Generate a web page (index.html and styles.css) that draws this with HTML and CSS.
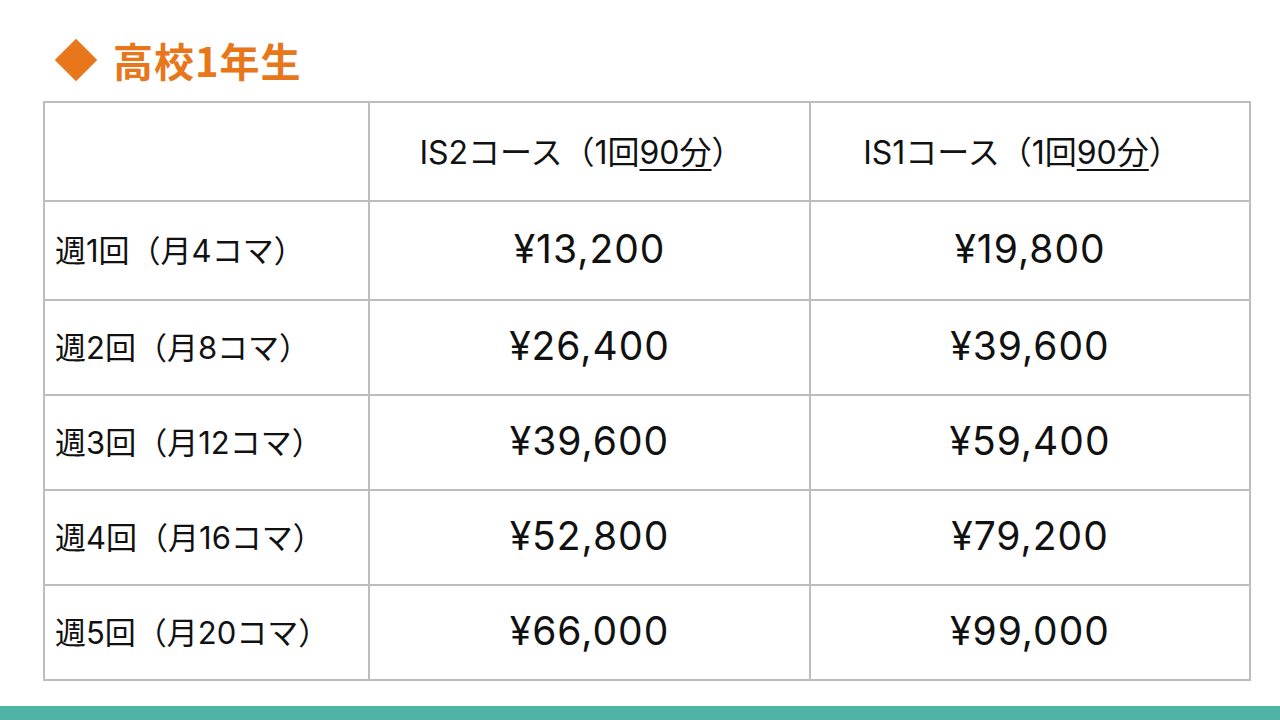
FILE: index.html
```html
<!DOCTYPE html>
<html lang="ja">
<head>
<meta charset="utf-8">
<link rel="stylesheet" href="styles.css">
</head>
<body>
<div class="page">
  <h1 class="title"><span class="diamond"></span>高校1年生</h1>
  <table class="price">
    <colgroup><col class="c1"><col class="c2"><col class="c3"></colgroup>
    <tr class="head">
      <th></th>
      <th>IS2コース（1回<u>90分</u>）</th>
      <th>IS1コース（1回<u>90分</u>）</th>
    </tr>
    <tr class="r1"><td class="lbl">週1回（月4コマ）</td><td class="amt">¥13,200</td><td class="amt">¥19,800</td></tr>
    <tr><td class="lbl">週2回（月8コマ）</td><td class="amt">¥26,400</td><td class="amt">¥39,600</td></tr>
    <tr><td class="lbl">週3回（月12コマ）</td><td class="amt">¥39,600</td><td class="amt">¥59,400</td></tr>
    <tr><td class="lbl">週4回（月16コマ）</td><td class="amt">¥52,800</td><td class="amt">¥79,200</td></tr>
    <tr><td class="lbl">週5回（月20コマ）</td><td class="amt">¥66,000</td><td class="amt">¥99,000</td></tr>
  </table>
</div>
<div class="bar"></div>
</body>
</html>
```
FILE: styles.css
```css
html, body {
  margin: 0;
  padding: 0;
  background: #ffffff;
}
body {
  width: 1280px;
  height: 720px;
  overflow: hidden;
  font-family: Inter, "Noto Sans CJK JP", sans-serif;
  color: #111;
}
.page {
  height: 706px;
  padding-left: 43px;
  box-sizing: border-box;
}
.title {
  margin: 0;
  height: 101px;
  box-sizing: border-box;
  padding-top: 32px;
  padding-left: 12px;
  display: flex;
  align-items: flex-start;
  font-family: "Noto Sans CJK JP", sans-serif;
  font-size: 40px;
  line-height: 56px;
  font-weight: 700;
  color: #e8761a;
  letter-spacing: 1px;
}
.diamond {
  width: 30px;
  height: 30px;
  background: #e8761a;
  transform: rotate(45deg);
  margin-top: 13px;
  margin-left: 6px;
  margin-right: 22px;
  flex: none;
}
.price {
  border-collapse: collapse;
  width: 1206px;
  table-layout: fixed;
}
.c1 { width: 325px; }
.c2 { width: 441px; }
.c3 { width: 440px; }
.price th, .price td {
  border: 2px solid #bdbdbd;
  padding: 0;
  height: 95px;
  box-sizing: border-box;
}
.head th {
  height: 99px;
  font-weight: 400;
  font-size: 32px;
  text-align: center;
  padding-right: 16px;
  padding-bottom: 4px;
}
.r1 td { height: 99px; }
.price u {
  text-decoration-thickness: 2px;
  text-underline-offset: 5px;
}
.lbl {
  font-size: 31px;
  padding-left: 10px !important;
  padding-bottom: 4px !important;
  text-align: left;
}
.amt {
  font-size: 39px;
  letter-spacing: 1px;
  text-align: center;
  padding-bottom: 4px !important;
}
.bar {
  height: 14px;
  background: #4fb3a6;
}
```
